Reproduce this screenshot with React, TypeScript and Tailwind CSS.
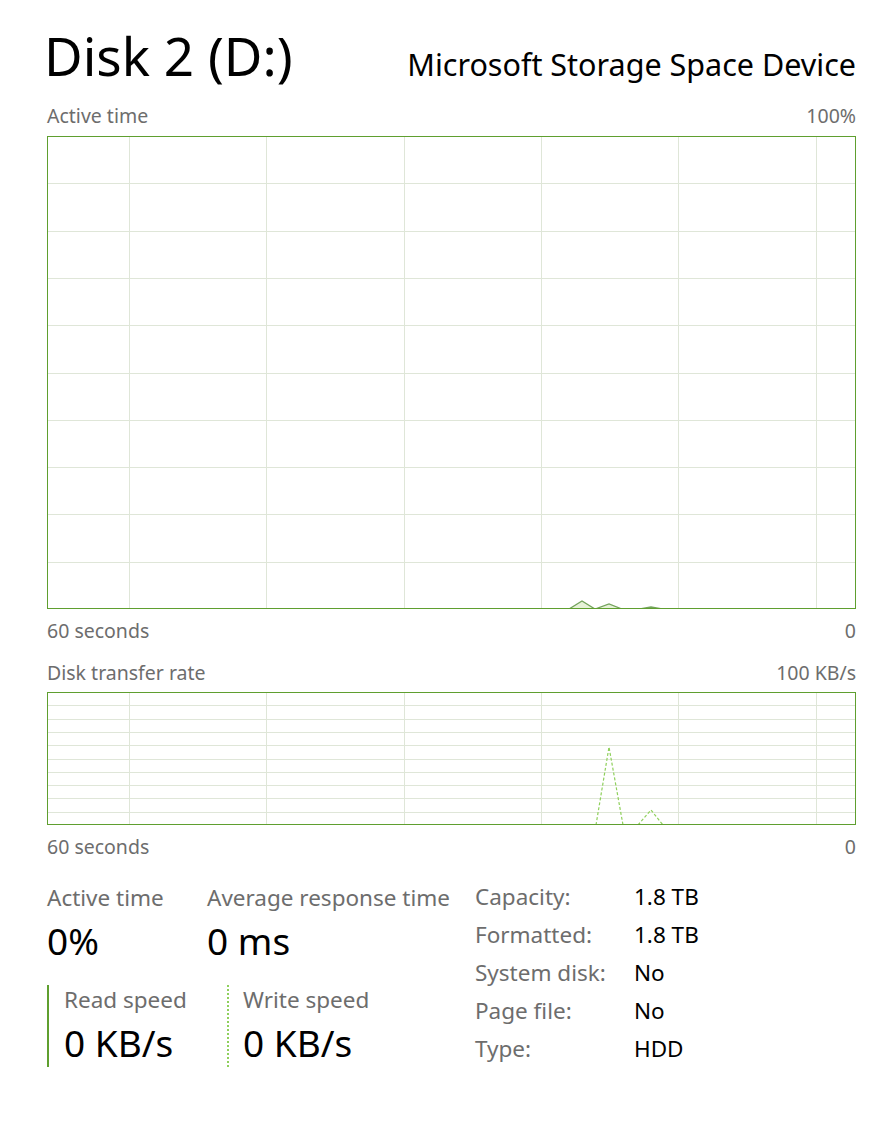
import type { ReactNode } from 'react'

const GRID = '#dfe6d8'
const EDGE = '#5f9f2f'

const columns = [82, 219, 357, 494, 631, 769]

function Chart({
  height,
  rows,
  children,
}: {
  height: number
  rows: number
  children?: ReactNode
}) {
  const width = 809
  const step = height / rows
  return (
    <svg width={width} height={height} viewBox={`0 0 ${width} ${height}`} className="block">
      {Array.from({ length: rows - 1 }, (_, i) => (
        <line
          key={'h' + i}
          x1={0}
          x2={width}
          y1={Math.round(step * (i + 1)) + 0.5}
          y2={Math.round(step * (i + 1)) + 0.5}
          stroke={GRID}
          strokeWidth={1}
        />
      ))}
      {columns.map(x => (
        <line key={'v' + x} x1={x + 0.5} x2={x + 0.5} y1={0} y2={height} stroke={GRID} strokeWidth={1} />
      ))}
      {children}
      <rect x={0.5} y={0.5} width={width - 1} height={height - 1} fill="none" stroke={EDGE} strokeWidth={1} />
    </svg>
  )
}

function AxisRow({ left, right }: { left: string; right: string }) {
  return (
    <div className="flex justify-between text-[19.5px] leading-[24px] text-[#6d6d6d]">
      <span>{left}</span>
      <span>{right}</span>
    </div>
  )
}

const details = [
  ['Capacity:', '1.8 TB'],
  ['Formatted:', '1.8 TB'],
  ['System disk:', 'No'],
  ['Page file:', 'No'],
  ['Type:', 'HDD'],
]

export default function App() {
  return (
    <div className="w-[893px] h-[1145px] bg-white pl-[47px] pr-[37px] font-['Segoe_UI','Noto_Sans',sans-serif] text-black">
      <div className="flex justify-between items-end h-[100px]">
        <h1 className="text-[53px] leading-[70px] -ml-[3px] mb-[9px]">Disk 2 (D:)</h1>
        <div className="text-[30.5px] leading-[40px] mb-[16px]">Microsoft Storage Space Device</div>
      </div>

      <div className="mt-[4px] mb-[8px]">
        <AxisRow left="Active time" right="100%" />
      </div>
      <Chart height={473} rows={10}>
        <polyline
          points="522,473 535,465 548,473 562,468 575,473 593,473 604,471 615,473"
          fill="#e6f2d8"
          stroke="#74a35c"
          strokeWidth={1.3}
        />
      </Chart>
      <div className="mt-[10px]">
        <AxisRow left="60 seconds" right="0" />
      </div>

      <div className="mt-[18px] mb-[7px]">
        <AxisRow left="Disk transfer rate" right="100 KB/s" />
      </div>
      <Chart height={133} rows={10}>
        <polyline
          points="549,133 562,55 576,133"
          fill="none"
          stroke="#8fd05c"
          strokeWidth={1.2}
          strokeDasharray="3 2"
        />
        <polyline
          points="591,133 604,118 616,133"
          fill="none"
          stroke="#8fd05c"
          strokeWidth={1.2}
          strokeDasharray="3 2"
        />
      </Chart>
      <div className="mt-[10px]">
        <AxisRow left="60 seconds" right="0" />
      </div>

      <div className="flex mt-[26px]">
        <div className="w-[428px]">
          <div className="flex">
            <div className="w-[160px]">
              <div className="text-[22.5px] leading-[26px] text-[#6d6d6d]">Active time</div>
              <div className="text-[37px] leading-[42px] mt-[9px]">0%</div>
            </div>
            <div>
              <div className="text-[22.5px] leading-[26px] text-[#6d6d6d]">Average response time</div>
              <div className="text-[37px] leading-[42px] mt-[9px]">0 ms</div>
            </div>
          </div>
          <div className="flex mt-[23px]">
            <div className="w-[180px] border-l-2 border-[#5f9f2f] pl-[15px] h-[82px]">
              <div className="text-[22.5px] leading-[26px] text-[#6d6d6d] mt-[2px]">Read speed</div>
              <div className="text-[37px] leading-[42px] mt-[9px]">0 KB/s</div>
            </div>
            <div className="border-l-2 border-dotted border-[#8fd05c] pl-[14px] h-[82px]">
              <div className="text-[22.5px] leading-[26px] text-[#6d6d6d] mt-[2px]">Write speed</div>
              <div className="text-[37px] leading-[42px] mt-[9px]">0 KB/s</div>
            </div>
          </div>
        </div>
        <div className="grid grid-cols-[159px_auto] auto-rows-[26px] gap-y-[12px] -mt-[1px]">
          {details.map(([label, value]) => (
            <div key={label} className="contents">
              <div className="text-[22.5px] leading-[26px] text-[#6d6d6d]">{label}</div>
              <div className="text-[22.5px] leading-[26px]">{value}</div>
            </div>
          ))}
        </div>
      </div>
    </div>
  )
}
